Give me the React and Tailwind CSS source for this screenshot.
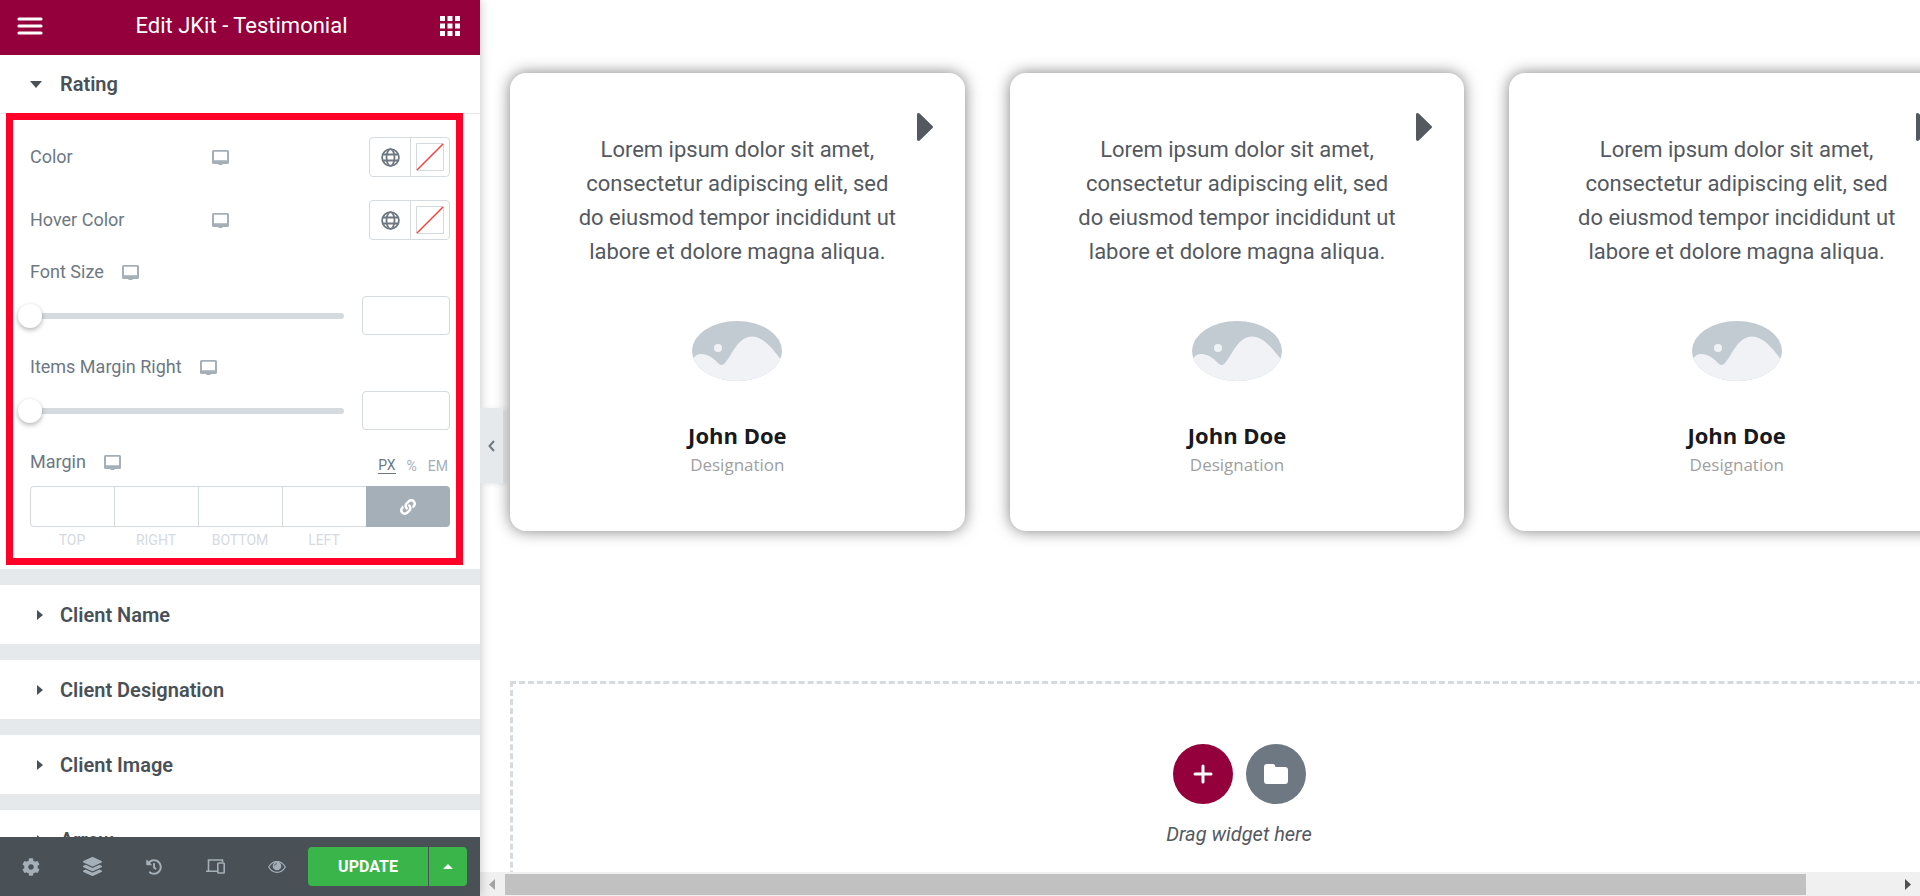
import React from 'react';
import { FaCog, FaLayerGroup, FaHistory, FaLink } from 'react-icons/fa';

const MonitorIcon = () => (
  <svg viewBox="0 0 17 15" className="w-[17px] h-[15px]" fill="#a4afb7" aria-hidden="true">
    <path
      fillRule="evenodd"
      d="M1.500 0h14A1.500 1.500 0 0 1 17 1.500v11a1.500 1.500 0 0 1-1.500 1.500H10.500v1h-4v-1h-5A1.500 1.500 0 0 1 0 12.500v-11A1.500 1.500 0 0 1 1.500 0zM2 1.800v8.400h13V1.800z"
    />
  </svg>
);

const GlobeIcon = () => (
  <svg viewBox="0 0 19 19" className="w-[19px] h-[19px]" fill="none" stroke="#6d7882" strokeWidth="1.800" aria-hidden="true">
    <circle cx="9.500" cy="9.500" r="8.400" />
    <ellipse cx="9.500" cy="9.500" rx="4" ry="8.400" />
    <path d="M1.800 6.500h15.400M1.800 12.500h15.400" />
  </svg>
);

const DevicesIcon = () => (
  <svg viewBox="0 0 19 15" className="w-[19px] h-[15px]" fill="none" stroke="currentColor" strokeWidth="1.600" aria-hidden="true">
    <path d="M2.500 11.500V1H16.500v2M0 12.300h11" />
    <rect x="11.800" y="4" width="6.400" height="10" rx=".8" />
  </svg>
);

const EyeIcon = () => (
  <svg viewBox="0 0 18 12" className="w-[18px] h-[12px]" fill="none" aria-hidden="true">
    <path d="M.7 6C2.600 2.700 5.600.7 9 .7S15.400 2.700 17.300 6C15.400 9.300 12.400 11.300 9 11.300S2.600 9.300.7 6z" stroke="currentColor" strokeWidth="1.200" />
    <circle cx="9" cy="5" r="4.300" fill="currentColor" />
    <path d="M6.600 5A2.400 2.400 0 0 1 9 2.600" stroke="#495157" strokeWidth=".8" />
  </svg>
);

const PlaceholderImage = () => (
  <svg viewBox="0 0 90 60" className="w-[90px] h-[60px]" role="img" aria-label="Client">
    <clipPath id="avatar">
      <ellipse cx="45" cy="30" rx="45" ry="30" />
    </clipPath>
    <g clipPath="url(#avatar)">
      <path fill="#c2cad2" d="M0 0h90v60H0z" />
      <path fill="#f0f2f5" d="M0 39C3 34 6 33 9 33c8 0 14 6 18 10 2 1.300 3 1.300 5 0C39 37 45 15.500 60 15.500c12 0 22 14 30 24V60H0z" />
      <circle cx="26" cy="27" r="4" fill="#f0f2f5" />
    </g>
  </svg>
);

const ColorControl = ({ label }) => (
  <div className="flex items-center h-10">
    <span className="w-[182px]">{label}</span>
    <MonitorIcon />
    <div className="ml-auto flex w-[81px] h-10 border border-[#d5dadf] rounded">
      <button aria-label={`${label} global`} className="w-[41px] flex items-center justify-center border-r border-[#d5dadf]">
        <GlobeIcon />
      </button>
      <button aria-label={`${label} picker`} className="flex-1 flex items-center justify-center">
        <svg viewBox="0 0 28 28" className="w-7 h-7" fill="none" aria-hidden="true">
          <path d="M.5.5h27v27H.5z" stroke="#d5dadf" />
          <path d="M1 27L27 1" stroke="#ff3b3b" strokeWidth="1.400" />
        </svg>
      </button>
    </div>
  </div>
);

const SliderControl = ({ id, label }) => (
  <div className="mt-5">
    <div className="flex items-center gap-[18px] h-6">
      <label htmlFor={id}>{label}</label>
      <MonitorIcon />
    </div>
    <div className="flex items-center gap-[18px] mt-3 -ml-3">
      <input
        id={id}
        type="range"
        defaultValue={0}
        className="flex-1 min-w-0 h-6 appearance-none bg-transparent [&::-webkit-slider-runnable-track]:h-1.5 [&::-webkit-slider-runnable-track]:rounded-full [&::-webkit-slider-runnable-track]:bg-[#d5dadf] [&::-webkit-slider-thumb]:appearance-none [&::-webkit-slider-thumb]:w-6 [&::-webkit-slider-thumb]:h-6 [&::-webkit-slider-thumb]:-mt-[9px] [&::-webkit-slider-thumb]:rounded-full [&::-webkit-slider-thumb]:bg-white [&::-webkit-slider-thumb]:shadow-[0_2px_5px_rgba(0,0,0,0.3)]"
      />
      <input type="text" aria-label={`${label} value`} className="w-[88px] h-[39px] px-2 border border-[#d5dadf] rounded" />
    </div>
  </div>
);

const sides = ['TOP', 'RIGHT', 'BOTTOM', 'LEFT'];

const MarginControl = () => (
  <div className="mt-5">
    <div className="flex items-center gap-[18px] h-6">
      <span>Margin</span>
      <MonitorIcon />
      <div className="self-end ml-auto mr-0.5 flex gap-[11px] text-sm leading-4 text-[#a4afb7]">
        <button className="text-[#6d7882] border-b border-[#6d7882]">PX</button>
        <button>%</button>
        <button>EM</button>
      </div>
    </div>
    <div className="grid grid-cols-5 mt-3">
      {sides.map((side) => (
        <label key={side} className="flex flex-col items-center text-sm leading-[18px] text-[#d5dadf]">
          <input
            type="text"
            className={`w-full h-[41px] px-2 mb-1 border-y border-l border-[#d5dadf] ${side === 'TOP' ? 'rounded-l' : ''}`}
          />
          {side}
        </label>
      ))}
      <button aria-label="Link values" className="h-[41px] flex items-center justify-center bg-[#a4afb7] text-white rounded-r">
        <FaLink className="w-4 h-4" />
      </button>
    </div>
  </div>
);

const ClosedSection = ({ title }) => (
  <button className="flex shrink-0 items-center w-full h-[59px] pl-[37px] bg-white text-left">
    <svg viewBox="0 0 6 10" className="w-[6px] h-[10px] mr-[17px]" fill="#495157" aria-hidden="true">
      <path d="M0 0l6 5-6 5z" />
    </svg>
    <span className="text-xl font-semibold text-[#495157]">{title}</span>
  </button>
);

const tools = [
  { name: 'Settings', icon: <FaCog className="w-[18px] h-[18px]" /> },
  { name: 'Navigator', icon: <FaLayerGroup className="w-[19px] h-[19px]" /> },
  { name: 'History', icon: <FaHistory className="w-4 h-4" /> },
  { name: 'Responsive mode', icon: <DevicesIcon /> },
  { name: 'Preview', icon: <EyeIcon /> },
];

const Sidebar = () => (
  <aside className="relative z-10 flex flex-col w-[480px] shrink-0 bg-[#e6e9ec] shadow-[0_0_10px_rgba(0,0,0,0.25)]">
    <header className="flex shrink-0 items-center justify-between h-[55px] pl-[17px] pr-5 pb-1 bg-[#93003c] text-white">
      <button aria-label="Menu">
        <svg viewBox="0 0 26 18" className="w-[26px] h-[18px]" stroke="currentColor" strokeWidth="3.200" strokeLinecap="round" aria-hidden="true">
          <path d="M2 2h22M2 9h22M2 16h22" />
        </svg>
      </button>
      <h1 className="text-[22px]">Edit JKit - Testimonial</h1>
      <button aria-label="Widgets">
        <svg viewBox="0 0 20 20" className="w-5 h-5" fill="currentColor" aria-hidden="true">
          <path d="M0 0h5v5H0zM7.500 0h5v5h-5zM15 0h5v5h-5zM0 7.500h5v5H0zM7.500 7.500h5v5h-5zM15 7.500h5v5h-5zM0 15h5v5H0zM7.500 15h5v5h-5zM15 15h5v5h-5z" />
        </svg>
      </button>
    </header>

    <div className="flex flex-col flex-1 min-h-0 gap-4 overflow-hidden">
      <section className="shrink-0 bg-white">
        <button className="flex items-center w-full h-[59px] pl-[30px] border-b border-[#e6e9ec] text-left">
          <svg viewBox="0 0 12 7" className="w-3 h-[7px] mr-[18px]" fill="#495157" aria-hidden="true">
            <path d="M0 0h12L6 7z" />
          </svg>
          <span className="text-xl font-semibold text-[#495157]">Rating</span>
        </button>
        <div className="pb-1">
          <div className="-mt-px ml-1.5 mr-[17px] pt-[17px] pl-[17px] pr-1.5 pb-[9px] border-[7px] border-[#ff0029] text-lg text-[#6d7882]">
            <div className="flex flex-col gap-[23px]">
              <ColorControl label="Color" />
              <ColorControl label="Hover Color" />
            </div>
            <SliderControl id="font-size" label="Font Size" />
            <SliderControl id="items-margin" label="Items Margin Right" />
            <MarginControl />
          </div>
        </div>
      </section>
      <ClosedSection title="Client Name" />
      <ClosedSection title="Client Designation" />
      <ClosedSection title="Client Image" />
      <ClosedSection title="Arrow" />
    </div>

    <footer className="flex shrink-0 items-center h-[59px] pr-[13px] bg-[#495157]">
      <div className="grid grid-cols-5 flex-1 text-[#a4afb7]">
        {tools.map((tool) => (
          <button key={tool.name} aria-label={tool.name} className="flex items-center justify-center h-10">
            {tool.icon}
          </button>
        ))}
      </div>
      <div className="flex h-[39px] gap-px text-white">
        <button className="w-[120px] rounded-l bg-[#39b54a] text-base font-bold">UPDATE</button>
        <button aria-label="Save options" className="flex items-center justify-center w-[38px] rounded-r bg-[#39b54a]">
          <svg viewBox="0 0 10 5" className="w-[10px] h-[5px]" fill="currentColor" aria-hidden="true">
            <path d="M0 5l5-5 5 5z" />
          </svg>
        </button>
      </div>
    </footer>

    <button aria-label="Hide panel" className="absolute left-full top-[408px] flex items-center justify-center w-[23px] h-[75px] bg-[#e6e9ec] shadow-[3px_1px_5px_rgba(0,0,0,0.1)]">
      <svg viewBox="0 0 7 12" className="w-[7px] h-[12px]" fill="none" stroke="#6d7882" strokeWidth="2" aria-hidden="true">
        <path d="M6 1L1.500 6 6 11" />
      </svg>
    </button>
  </aside>
);

const TestimonialCard = () => (
  <article className="relative flex flex-col items-center h-[458px] px-16 pt-[60px] bg-white rounded-2xl shadow-[0_0_15px_rgba(0,0,0,0.5)] text-center">
    <button aria-label="Next" className="absolute top-10 right-8">
      <svg viewBox="0 0 16 28" className="w-4 h-7" fill="#54595f" aria-hidden="true">
        <path d="M0 1.500C0 0 2 -.5 3 .7L15.500 13q1 1 0 2L3 27.300C2 28.500 0 28 0 26.500z" />
      </svg>
    </button>
    <p className="text-[22px] leading-[34px] text-[#54595f]">
      Lorem ipsum dolor sit amet, consectetur adipiscing elit, sed do eiusmod tempor incididunt ut labore et dolore magna aliqua.
    </p>
    <div className="mt-[52px] mb-10">
      <PlaceholderImage />
    </div>
    <h3 className="font-['Open_Sans',sans-serif] text-[22px] leading-7 font-bold text-[#18191d]">John Doe</h3>
    <span className="mt-1 font-['Open_Sans',sans-serif] text-[17px] leading-6 text-[#a0a0a0]">Designation</span>
  </article>
);

const Scrollbar = () => (
  <div className="flex shrink-0 items-center h-6 bg-[#f0f0f0]">
    <svg viewBox="0 0 25 24" className="w-[25px] h-6" fill="#a3a3a3" aria-hidden="true">
      <path d="M15 7v11L9 12.500z" />
    </svg>
    <div className="flex-1">
      <div className="w-[calc(100%-89px)] h-[21px] bg-[#c1c1c1]" />
    </div>
    <svg viewBox="0 0 25 24" className="w-[25px] h-6" fill="#505050" aria-hidden="true">
      <path d="M10 7v11l6-5.500z" />
    </svg>
  </div>
);

const Preview = () => (
  <main className="flex flex-col flex-1 min-w-0 bg-white">
    <div className="flex-1 min-h-0 overflow-hidden">
      <div className="w-[calc(100%+78px)] px-[30px] pt-[73px]">
        <div className="grid grid-cols-3 gap-[45px] mr-1">
          <TestimonialCard />
          <TestimonialCard />
          <TestimonialCard />
        </div>
        <div className="flex flex-col items-center mt-[150px] pt-[60px] pb-20 border-[3px] border-dashed border-[#d5dadf]">
          <div className="flex gap-[13px]">
            <button aria-label="Add section" className="flex items-center justify-center w-[60px] h-[60px] rounded-full bg-[#93003c] text-white">
              <svg viewBox="0 0 20 20" className="w-5 h-5" stroke="currentColor" strokeWidth="3" strokeLinecap="round" aria-hidden="true">
                <path d="M10 2v16M2 10h16" />
              </svg>
            </button>
            <button aria-label="Add template" className="flex items-center justify-center w-[60px] h-[60px] rounded-full bg-[#6d7882] text-white">
              <svg viewBox="0 0 24 20" className="w-6 h-5" fill="currentColor" aria-hidden="true">
                <path d="M3 0h6q2 0 2.500 3H21q3 0 3 3v11q0 3-3 3H3q-3 0-3-3V3q0-3 3-3z" />
              </svg>
            </button>
          </div>
          <p className="mt-4 text-xl leading-7 italic text-[#54595f]">Drag widget here</p>
        </div>
      </div>
    </div>
    <Scrollbar />
  </main>
);

export default function App() {
  return (
    <div className="flex h-screen overflow-hidden font-[Roboto,sans-serif]">
      <Sidebar />
      <Preview />
    </div>
  );
}
